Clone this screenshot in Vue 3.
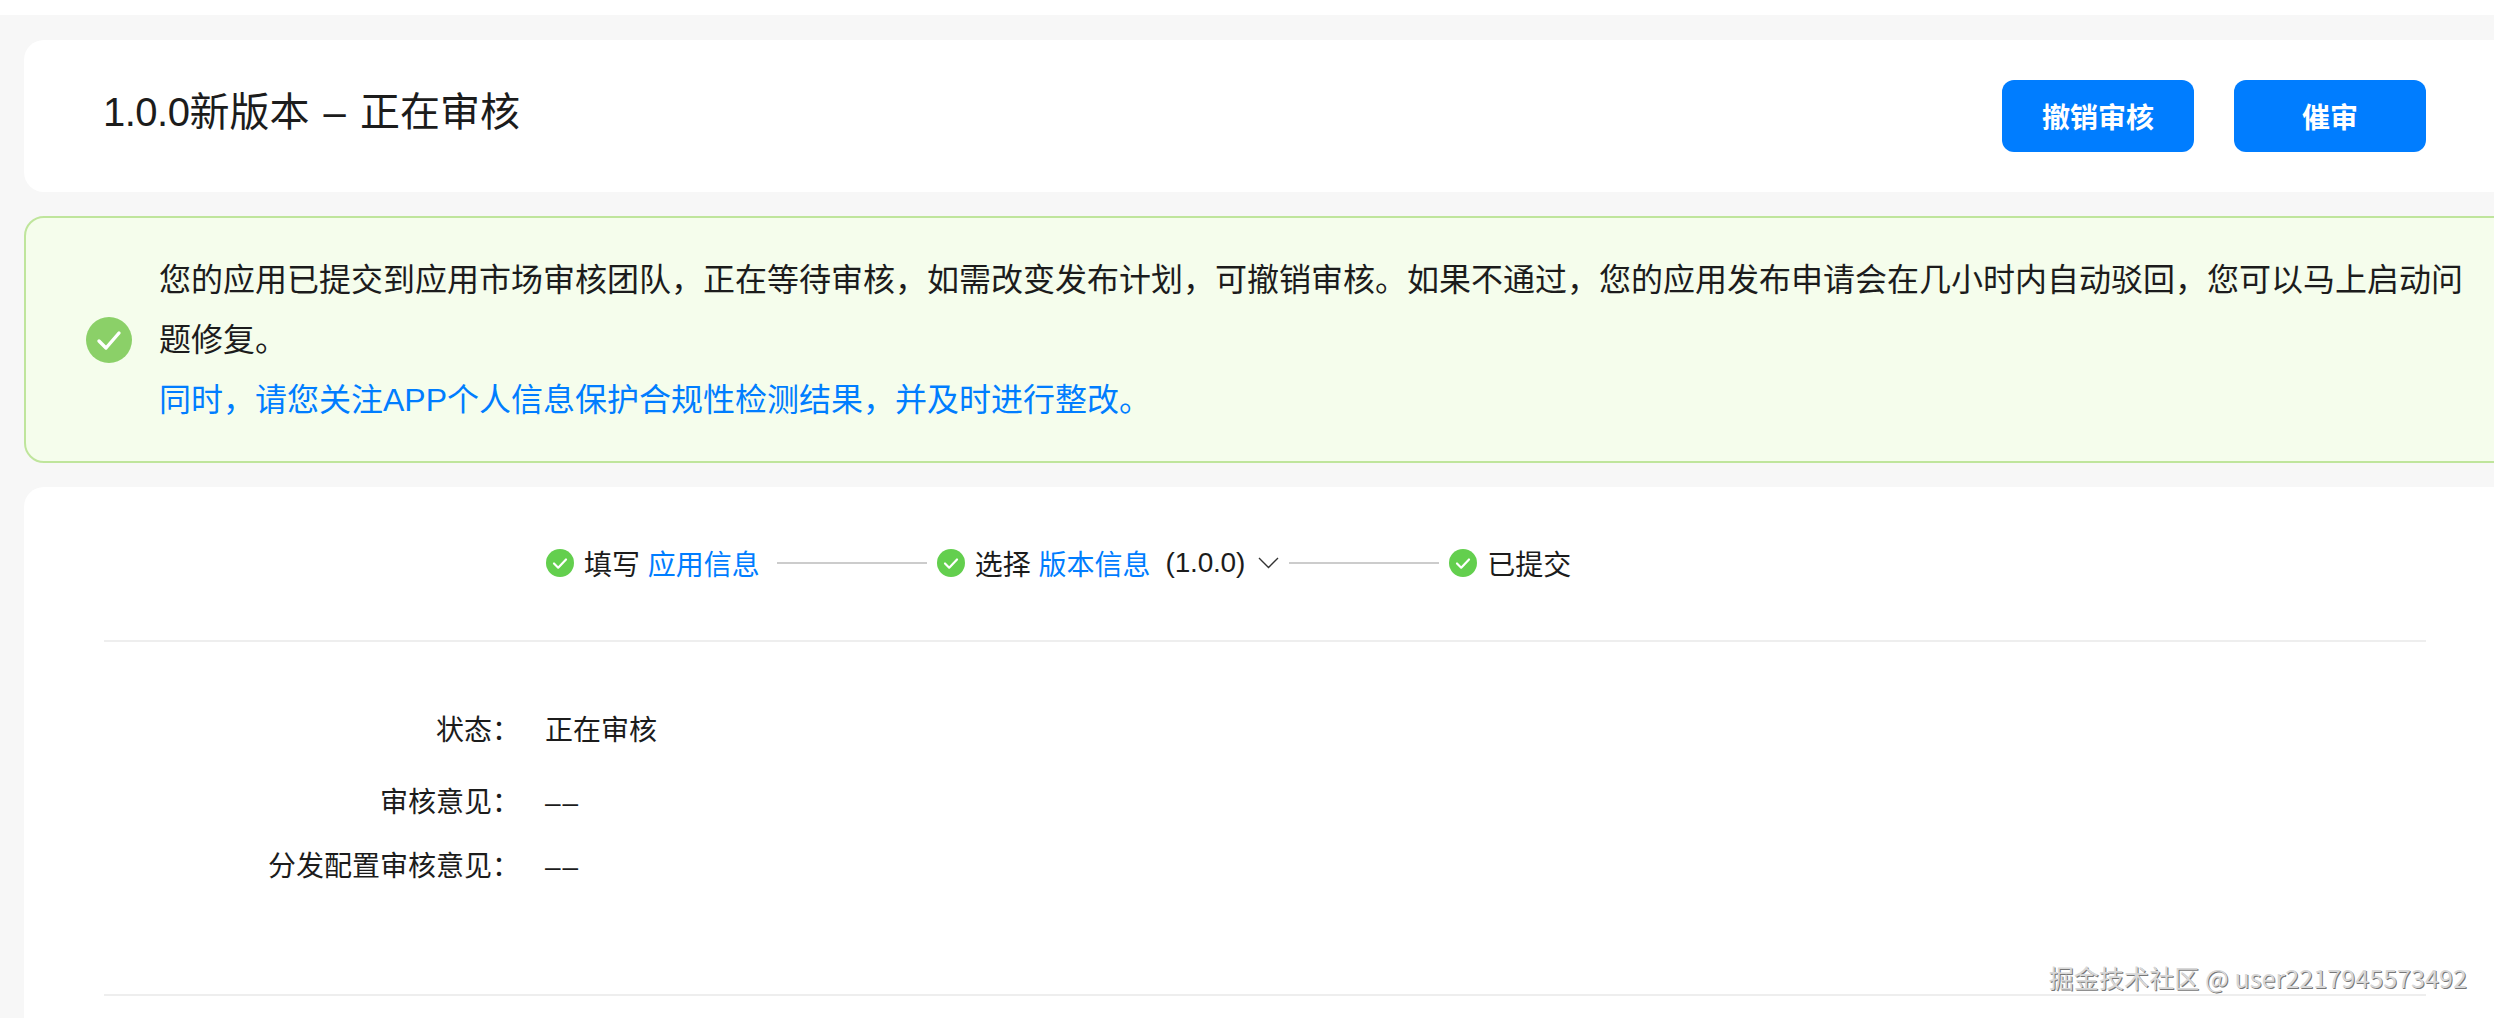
<script setup>
const details = [
  { label: '状态\uFF1A', value: '正在审核' },
  { label: '审核意见\uFF1A', value: '––', empty: true },
  { label: '分发配置审核意见\uFF1A', value: '––', empty: true }
]
const notice = '您的应用已提交到应用市场审核团队\uFF0C正在等待审核\uFF0C如需改变发布计划\uFF0C可撤销审核。如果不通过\uFF0C您的应用发布申请会在几小时内自动驳回\uFF0C您可以马上启动问题修复。'
const noticeLink = '同时\uFF0C请您关注APP个人信息保护合规性检测结果\uFF0C并及时进行整改。'
</script>

<template>
  <div class="page">
    <section class="card head">
      <h1><span class="num">1.0.0</span>新版本 – 正在审核</h1>
      <div class="actions">
        <button class="btn">撤销审核</button>
        <button class="btn">催审</button>
      </div>
    </section>

    <section class="notice">
      <svg class="notice-icon" viewBox="0 0 46 46">
        <circle cx="23" cy="23" r="23" fill="#8bd068" />
        <path d="M13 24l7 7 13-15" fill="none" stroke="#fff" stroke-width="3.4" stroke-linecap="round" stroke-linejoin="round" />
      </svg>
      <div class="notice-text">
        <p>{{ notice }}</p>
        <p class="link">{{ noticeLink }}</p>
      </div>
    </section>

    <section class="card body">
      <div class="steps">
        <svg class="tick" viewBox="0 0 28 28"><circle cx="14" cy="14" r="14" fill="#63cf4e" /><path d="M8 14.5l4.2 4.2L20 10.5" fill="none" stroke="#fff" stroke-width="2.2" stroke-linecap="round" stroke-linejoin="round" /></svg>
        <span class="step-text">填写 <span class="link">应用信息</span></span>
        <i class="step-line"></i>
        <svg class="tick" viewBox="0 0 28 28"><circle cx="14" cy="14" r="14" fill="#63cf4e" /><path d="M8 14.5l4.2 4.2L20 10.5" fill="none" stroke="#fff" stroke-width="2.2" stroke-linecap="round" stroke-linejoin="round" /></svg>
        <span class="step-text">选择 <span class="link">版本信息</span></span>
        <span class="version">(1.0.0)</span>
        <svg class="chevron" viewBox="0 0 21 12"><path d="M1 1l9.5 9.5L20 1" fill="none" stroke="#333" stroke-width="1.4" /></svg>
        <i class="step-line"></i>
        <svg class="tick" viewBox="0 0 28 28"><circle cx="14" cy="14" r="14" fill="#63cf4e" /><path d="M8 14.5l4.2 4.2L20 10.5" fill="none" stroke="#fff" stroke-width="2.2" stroke-linecap="round" stroke-linejoin="round" /></svg>
        <span class="step-text">已提交</span>
      </div>

      <div class="details">
        <div v-for="row in details" :key="row.label" class="row">
          <span class="label">{{ row.label }}</span>
          <span class="value" :class="{ empty: row.empty }">{{ row.value }}</span>
        </div>
      </div>
    </section>

    <div class="watermark">掘金技术社区 @ user2217945573492</div>
  </div>
</template>

<style scoped>
.page {
  position: relative;
  box-sizing: border-box;
  width: 2494px;
  height: 1003px;
  margin-top: 15px;
  padding: 25px 0 0 24px;
  overflow: hidden;
  background: #f7f7f7;
  color: #1c1c1c;
  font-family: "Liberation Sans", "Noto Sans CJK SC", sans-serif;
}

/* cards run past the right edge of the window */
.card {
  box-sizing: border-box;
  width: 2520px;
  padding: 0 118px 0 80px;
  background: #fff;
  border-radius: 20px;
}

.head {
  display: flex;
  justify-content: space-between;
  align-items: center;
  height: 152px;
}

h1 {
  margin: 0 0 8px;
  margin-left: -1px;
  font-size: 40px;
  line-height: 56px;
  font-weight: 400;
  word-spacing: 3px;
}

.num {
  letter-spacing: -0.5px;
}

.actions {
  display: flex;
  gap: 40px;
}

.btn {
  width: 192px;
  height: 72px;
  border: none;
  border-radius: 12px;
  background: #007dff;
  color: #fff;
  font-family: inherit;
  font-size: 28px;
  font-weight: 700;
}

.notice {
  box-sizing: border-box;
  display: flex;
  align-items: center;
  width: 2520px;
  height: 247px;
  margin: 24px 0;
  padding-left: 60px;
  background: #f5fdec;
  border: 2px solid #bfe59c;
  border-radius: 20px;
}

.notice-icon {
  flex: none;
  width: 46px;
  height: 46px;
  margin-right: 27px;
}

.notice-text {
  width: 2320px;
  font-size: 32px;
  line-height: 60px;
}

p {
  margin: 0;
}

.link {
  color: #007dff;
}

.body {
  height: 560px;
}

.steps {
  display: flex;
  align-items: center;
  height: 40px;
  padding: 56px 0 57px 442px;
  border-bottom: 2px solid #eee;
  font-size: 28px;
}

.tick {
  flex: none;
  width: 28px;
  height: 28px;
  margin-right: 10px;
}

.step-text {
  white-space: nowrap;
}

.step-line {
  flex: none;
  width: 150px;
  height: 2px;
  margin: 0 10px 0 17px;
  background: #ccc;
}

.version {
  margin-left: 15px;
  letter-spacing: -0.2px;
}

.chevron {
  flex: none;
  width: 21px;
  height: 12px;
  margin-left: 13px;
}

.chevron + .step-line {
  margin-left: 10px;
}

.details {
  padding: 69px 0 107px;
  border-bottom: 2px solid #eee;
  font-size: 28px;
  line-height: 40px;
}

.row {
  display: flex;
  gap: 25px;
  margin-bottom: 24px;
}

.row:first-child {
  margin-bottom: 32px;
}

.row:last-child {
  margin-bottom: 0;
}

.label {
  width: 416px;
  text-align: right;
}

.empty {
  letter-spacing: 2px;
}

.watermark {
  position: absolute;
  right: 27px;
  top: 945px;
  font-family: "Noto Sans CJK SC", sans-serif;
  font-size: 25px;
  line-height: 34px;
  letter-spacing: 0.1px;
  color: #d8d8d8;
  text-shadow: 1px 1px 0 #777;
  white-space: nowrap;
}
</style>

<style>
body {
  background: #fff;
}
</style>
